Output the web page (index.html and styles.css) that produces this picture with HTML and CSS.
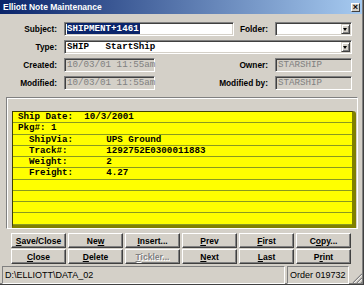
FILE: index.html
```html
<!DOCTYPE html>
<html lang="en">
<head>
    <meta charset="UTF-8">
    <title>Elliott Note Maintenance</title>
    <link rel="stylesheet" href="styles.css">
</head>
<body>
    <div class="window">
        <div class="titlebar">
            <span class="title">Elliott Note Maintenance</span>
            <span class="close-btn">&#215;</span>
        </div>

        <div class="fields">
            <div class="row">
                <span class="label">Subject:</span>
                <span class="field subject"><span class="selected">SHIPMENT+1461</span></span>
                <span class="label2">Folder:</span>
                <span class="field combo small"><span class="drop"></span></span>
            </div>
            <div class="row">
                <span class="label">Type:</span>
                <span class="field combo wide">SHIP   StartShip<span class="drop"></span></span>
            </div>
            <div class="row">
                <span class="label">Created:</span>
                <span class="field disabled date">10/03/01 11:55am</span>
                <span class="label2">Owner:</span>
                <span class="field disabled small">STARSHIP</span>
            </div>
            <div class="row">
                <span class="label">Modified:</span>
                <span class="field disabled date">10/03/01 11:55am</span>
                <span class="label2">Modified by:</span>
                <span class="field disabled small">STARSHIP</span>
            </div>
        </div>

        <div class="panel">
            <div class="note">
                <div class="line">Ship Date:  10/3/2001</div>
                <div class="line">Pkg#: 1</div>
                <div class="line">  ShipVia:      UPS Ground</div>
                <div class="line">  Track#:       1292752E0300011883</div>
                <div class="line">  Weight:       2</div>
                <div class="line">  Freight:      4.27</div>
                <div class="line"></div>
                <div class="line"></div>
                <div class="line"></div>
                <div class="line"></div>
            </div>
        </div>

        <div class="buttons">
            <button class="btn"><u>S</u>ave/Close</button>
            <button class="btn">Ne<u>w</u></button>
            <button class="btn"><u>I</u>nsert...</button>
            <button class="btn"><u>P</u>rev</button>
            <button class="btn"><u>F</u>irst</button>
            <button class="btn">C<u>o</u>py...</button>
            <button class="btn"><u>C</u>lose</button>
            <button class="btn"><u>D</u>elete</button>
            <button class="btn disabled"><u>T</u>ickler...</button>
            <button class="btn"><u>N</u>ext</button>
            <button class="btn"><u>L</u>ast</button>
            <button class="btn">P<u>r</u>int</button>
        </div>

        <div class="statusbar">
            <span class="status-panel path">D:\ELLIOTT\DATA_02</span>
            <span class="status-panel order">Order 019732</span>
            <svg class="grip" width="12" height="12" viewBox="0 0 12 12">
                <path d="M11 2 L2 11 M11 6 L6 11 M11 10 L10 11" stroke="#808080" stroke-width="1.2"/>
                <path d="M11 3 L3 11 M11 7 L7 11" stroke="#fff" stroke-width="0.8"/>
            </svg>
        </div>
    </div>
</body>
</html>
```

FILE: styles.css
```css
body {
    margin: 0;
    font-family: "Liberation Sans", Arial, sans-serif;
}

.window {
    box-sizing: border-box;
    width: 364px;
    height: 285px;
    background: #d4d0c8;
    border-right: 1px solid #404040;
    border-bottom: 1px solid #404040;
    box-shadow: inset -1px -1px #808080;
    overflow: hidden;
}

.titlebar {
    height: 14px;
    margin-right: 1px;
    display: flex;
    align-items: center;
    justify-content: space-between;
    background: linear-gradient(to right, #0a246a, #a6caf0);
    padding: 0 2px 0 3px;
}

.title {
    color: #fff;
    font-weight: bold;
    font-size: 8.5px;
}

.close-btn {
    box-sizing: border-box;
    width: 9px;
    height: 9px;
    background: #d4d0c8;
    border: 1px solid;
    border-color: #fff #404040 #404040 #fff;
    font-size: 9px;
    line-height: 6px;
    font-weight: bold;
    text-align: center;
    color: #000;
}

.fields {
    padding: 8px 11px 0 0;
    display: flex;
    flex-direction: column;
    gap: 4px;
}

.row {
    display: flex;
    align-items: center;
    height: 14px;
}

.label {
    width: 57px;
    margin-right: 7px;
    text-align: right;
    font-weight: bold;
    font-size: 8.3px;
    color: #000;
}

.label2 {
    flex: 1;
    margin-right: 7px;
    text-align: right;
    font-weight: bold;
    font-size: 8.3px;
    color: #000;
    white-space: nowrap;
}

.field {
    box-sizing: border-box;
    position: relative;
    height: 14px;
    background: #fff;
    border: 1px solid;
    border-color: #808080 #fff #fff #808080;
    box-shadow: inset 1px 1px #404040, inset -1px -1px #d4d0c8;
    font-family: "Liberation Mono", "Courier New", monospace;
    font-size: 9.2px;
    font-weight: bold;
    line-height: 12px;
    padding-left: 2px;
    white-space: pre;
}

.subject {
    width: 170px;
}

.selected {
    background: #0a246a;
    color: #fff;
    padding: 0 1px 0 0;
}

.small {
    width: 77px;
}

.wide {
    flex: 1;
}

.date {
    width: 91px;
}

.disabled {
    background: #d4d0c8;
    color: #808080;
    font-weight: normal;
}

.drop {
    position: absolute;
    top: 1px;
    right: 1px;
    box-sizing: border-box;
    width: 9px;
    height: 10px;
    background: #d4d0c8;
    border: 1px solid;
    border-color: #d4d0c8 #404040 #404040 #d4d0c8;
    box-shadow: inset 1px 1px #fff, inset -1px -1px #808080;
}

.drop::after {
    content: "";
    position: absolute;
    left: 1px;
    top: 3px;
    border-left: 2.5px solid transparent;
    border-right: 2.5px solid transparent;
    border-top: 3px solid #000;
}

.panel {
    margin: 7px 5px 0 6px;
    height: 132px;
    box-sizing: border-box;
    border: 1px solid;
    border-color: #808080 #fff #fff #808080;
    box-shadow: inset 1px 1px #fff;
    padding: 13px 1px 0 5px;
}

.note {
    background: #ffff00;
    border-top: 1px solid #404000;
    border-left: 1px solid #404000;
    border-right: 4px solid #808000;
    border-bottom: 3px solid #808000;
    border-top-right-radius: 3px;
}

.line {
    box-sizing: border-box;
    height: 11.25px;
    border-bottom: 1px solid #8a9a20;
    padding-left: 5px;
    font-family: "Liberation Mono", "Courier New", monospace;
    font-size: 9.2px;
    font-weight: bold;
    line-height: 10px;
    white-space: pre;
    color: #000;
}

.buttons {
    display: grid;
    grid-template-columns: repeat(6, 55px);
    column-gap: 2px;
    row-gap: 1px;
    margin: 4px 0 0 11px;
}

.btn {
    box-sizing: border-box;
    height: 15px;
    padding: 0;
    background: #d4d0c8;
    border: 1px solid;
    border-color: #fff #404040 #404040 #fff;
    box-shadow: inset -1px -1px #808080;
    font-family: "Liberation Sans", Arial, sans-serif;
    font-size: 8.5px;
    font-weight: bold;
    color: #000;
}

.btn.disabled {
    color: #808080;
    text-shadow: 1px 1px #fff;
}

.statusbar {
    display: flex;
    align-items: flex-end;
    height: 19px;
    margin-top: 1px;
    padding: 0 0 0 2px;
    gap: 2px;
}

.status-panel {
    box-sizing: border-box;
    flex-shrink: 0;
    height: 18px;
    border: 1px solid;
    border-color: #808080 #fff #fff #808080;
    font-size: 9px;
    line-height: 16px;
    padding-left: 2px;
    color: #000;
    white-space: nowrap;
}

.path {
    width: 283px;
}

.order {
    width: 62px;
}

.grip {
    flex-shrink: 0;
}
```
